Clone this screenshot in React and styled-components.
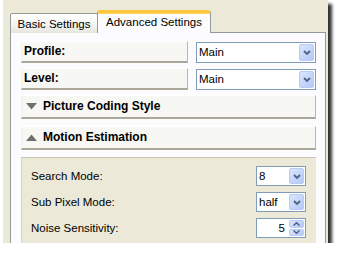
import React from 'react'
import styled, { createGlobalStyle } from 'styled-components'

const GlobalStyle = createGlobalStyle`
  html, body {
    margin: 0;
    background: #ffffff;
  }
  body {
    font-family: 'Liberation Sans', Arial, sans-serif;
    font-size: 11px;
    color: #000;
  }
`

const Window = styled.div`
  margin-left: 3px;
  width: 325px;
  height: 243px;
  background: #ece9d8;
  box-shadow: 4px 4px 3px rgba(0, 0, 0, 0.8);
  overflow: hidden;
  padding: 10px 0 0 7px;
  box-sizing: border-box;
`

const Tabs = styled.div`
  display: flex;
  align-items: flex-end;
  position: relative;
  z-index: 1;
  margin-bottom: -1px;
`

const Tab = styled.div`
  box-sizing: border-box;
  display: flex;
  align-items: center;
  justify-content: center;
  border: 1px solid #919b9c;
  border-bottom: none;
  font-size: 11.5px;
  ${(props) =>
    props.active
      ? `
    width: 114px;
    height: 23px;
    padding-bottom: 2px;
    margin-left: -1px;
    background: #fcfcfe;
    border-top: 3px solid #ffc83c;
    box-shadow: inset 0 1px 0 #ffd766;
    border-top-left-radius: 3px;
    border-top-right-radius: 3px;
  `
      : `
    width: 88px;
    height: 20px;
    padding-top: 1px;
    background: linear-gradient(#ffffff, #f3f3ef 60%, #e6e5dd);
    border-top-left-radius: 2px;
    border-top-right-radius: 2px;
  `}
`

const Panel = styled.div`
  width: 316px;
  height: 230px;
  box-sizing: border-box;
  border: 1px solid #919b9c;
  background: #fcfcfe;
  padding: 8px 9px 0 10px;
  display: flex;
  flex-direction: column;
`

const Row = styled.div`
  display: flex;
  align-items: center;
  gap: 8px;
  margin-bottom: 5px;
`

const LabelBox = styled.div`
  box-sizing: border-box;
  flex: 1;
  height: 22px;
  display: flex;
  align-items: center;
  padding-left: 2px;
  padding-bottom: 1px;
  background: #f7f7f4;
  border-top: 1px solid #ffffff;
  border-left: 1px solid #f2f2ee;
  border-right: 1px solid #b9b6aa;
  border-bottom: 2px solid #aca899;
  font-weight: 700;
  font-size: 12px;
`

const Header = styled(LabelBox)`
  flex: none;
  height: 24px;
  padding-left: 4px;
  gap: 6px;
  margin-bottom: ${(props) => props.space}px;
`

const SelectBox = styled.div`
  box-sizing: border-box;
  width: ${(props) => props.w}px;
  height: ${(props) => props.h}px;
  border: 1px solid #7f9db9;
  background: #ffffff;
  display: flex;
  align-items: stretch;
  padding: 1px;
`

const SelectText = styled.div`
  flex: 1;
  display: flex;
  align-items: center;
  justify-content: ${(props) => (props.right ? 'flex-end' : 'flex-start')};
  padding: 0 4px 0 1px;
  font-size: 11.5px;
`

const DropButton = styled.div`
  width: 15px;
  box-sizing: border-box;
  border: 1px solid #b9cbf3;
  border-radius: 2px;
  background: linear-gradient(135deg, #dbe6fd, #b3c8f7);
  display: flex;
  align-items: center;
  justify-content: center;
`

const SpinButtons = styled.div`
  width: 15px;
  display: flex;
  flex-direction: column;
  gap: 1px;
`

const SpinHalf = styled(DropButton)`
  width: 100%;
  flex: 1;
`

const Content = styled.div`
  flex: 1;
  background: #ece9d8;
  border-top: 1px solid #c9c6b8;
  border-left: 1px solid #d6d3c6;
  padding: 8px 10px 0 9px;
  display: flex;
  flex-direction: column;
  gap: 6px;
`

const FieldRow = styled.div`
  display: flex;
  align-items: center;
  justify-content: space-between;
  font-size: 11.5px;
`

const Chevron = ({ up }) => (
  <svg width="8" height="5" viewBox="0 0 8 5">
    <path
      d={up ? 'M1 4 L4 1 L7 4' : 'M1 1 L4 4 L7 1'}
      fill="none"
      stroke="#4d6185"
      strokeWidth="1.8"
    />
  </svg>
)

const SmallChevron = ({ up }) => (
  <svg width="7" height="4" viewBox="0 0 7 4">
    <path
      d={up ? 'M0.5 3.5 L3.5 0.8 L6.5 3.5' : 'M0.5 0.5 L3.5 3.2 L6.5 0.5'}
      fill="none"
      stroke="#4d6185"
      strokeWidth="1.5"
    />
  </svg>
)

const Triangle = ({ up }) => (
  <svg width="11" height="7" viewBox="0 0 11 7">
    <path d={up ? 'M0 7 L5.5 0.5 L11 7 Z' : 'M0 0 L11 0 L5.5 6.5 Z'} fill="#6f6f6f" />
  </svg>
)

function Select({ value, w, h }) {
  return (
    <SelectBox w={w} h={h}>
      <SelectText>{value}</SelectText>
      <DropButton>
        <Chevron />
      </DropButton>
    </SelectBox>
  )
}

function Spinner({ value }) {
  return (
    <SelectBox w={50} h={20}>
      <SelectText right>{value}</SelectText>
      <SpinButtons>
        <SpinHalf>
          <SmallChevron up />
        </SpinHalf>
        <SpinHalf>
          <SmallChevron />
        </SpinHalf>
      </SpinButtons>
    </SelectBox>
  )
}

export default function App() {
  return (
    <>
      <GlobalStyle />
      <Window>
        <Tabs>
          <Tab>Basic Settings</Tab>
          <Tab active>Advanced Settings</Tab>
        </Tabs>
        <Panel>
          <Row>
            <LabelBox>Profile:</LabelBox>
            <Select value="Main" w={120} h={21} />
          </Row>
          <Row>
            <LabelBox>Level:</LabelBox>
            <Select value="Main" w={120} h={21} />
          </Row>
          <Header space={7}>
            <Triangle />
            Picture Coding Style
          </Header>
          <Header space={7}>
            <Triangle up />
            Motion Estimation
          </Header>
          <Content>
            <FieldRow>
              Search Mode:
              <Select value="8" w={50} h={20} />
            </FieldRow>
            <FieldRow>
              Sub Pixel Mode:
              <Select value="half" w={50} h={20} />
            </FieldRow>
            <FieldRow>
              Noise Sensitivity:
              <Spinner value="5" />
            </FieldRow>
          </Content>
        </Panel>
      </Window>
    </>
  )
}
